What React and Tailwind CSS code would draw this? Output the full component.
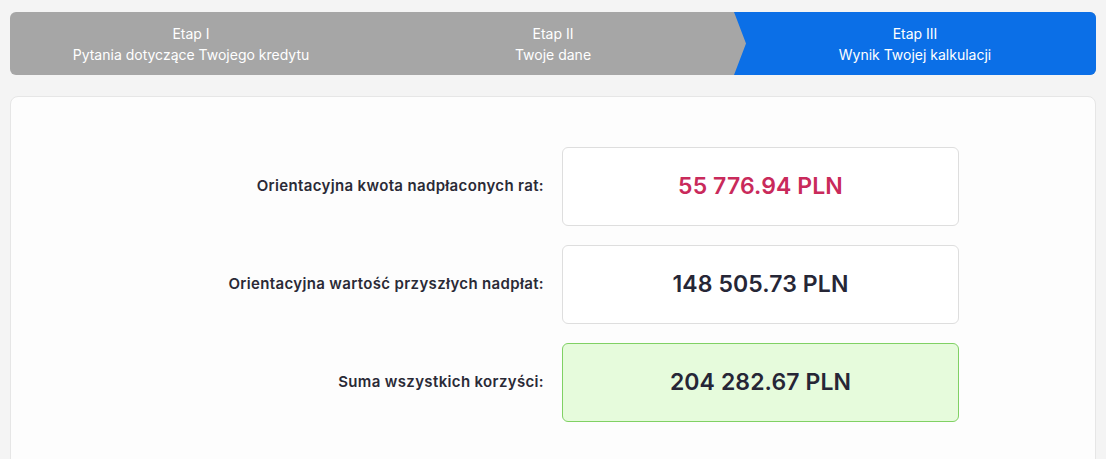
export default function App() {
  const font = { fontFamily: "Inter, 'Noto Sans', sans-serif" };
  const rows = [
    { label: "Orientacyjna kwota nadpłaconych rat:", value: "55 776.94 PLN", box: "bg-white border-[#dedede]", text: "text-[#c92a5b]" },
    { label: "Orientacyjna wartość przyszłych nadpłat:", value: "148 505.73 PLN", box: "bg-white border-[#dedede]", text: "text-[#262636]" },
    { label: "Suma wszystkich korzyści:", value: "204 282.67 PLN", box: "bg-[#e6fbdc] border-[#80d164]", text: "text-[#262636]" },
  ];
  return (
    <div className="min-h-[459px] bg-[#f4f4f4] px-[10px] pt-[12px] overflow-hidden" style={font}>
      <div className="flex h-[63px] rounded-md overflow-hidden bg-[#a6a6a6] text-white text-[14px] leading-[21px]">
        <div className="w-[362px] flex flex-col items-center justify-center">
          <span>Etap I</span>
          <span>Pytania dotyczące Twojego kredytu</span>
        </div>
        <div className="w-[362px] flex flex-col items-center justify-center">
          <span>Etap II</span>
          <span>Twoje dane</span>
        </div>
        <div className="flex-1 flex flex-col items-center justify-center bg-[#0b6fe7] [clip-path:polygon(0_0,100%_0,100%_100%,0_100%,12px_50%)]">
          <span>Etap III</span>
          <span>Wynik Twojej kalkulacji</span>
        </div>
      </div>
      <div className="mt-[21px] bg-[#fdfdfd] border border-[#e6e6e6] rounded-lg pt-[50px] pb-[40px] h-[400px]">
        <div className="flex flex-col gap-[19px]">
          {rows.map((r) => (
            <div key={r.label} className="grid grid-cols-2 gap-x-[18px] items-center">
              <div className="text-right text-[15px] font-semibold text-[#2a2a36] tracking-[0.35px]">{r.label}</div>
              <div className={`w-[397px] h-[79px] border rounded-md flex items-center justify-center ${r.box}`}>
                <span className={`text-[23px] font-semibold tracking-[0.1px] ${r.text}`}>{r.value}</span>
              </div>
            </div>
          ))}
        </div>
      </div>
    </div>
  );
}
